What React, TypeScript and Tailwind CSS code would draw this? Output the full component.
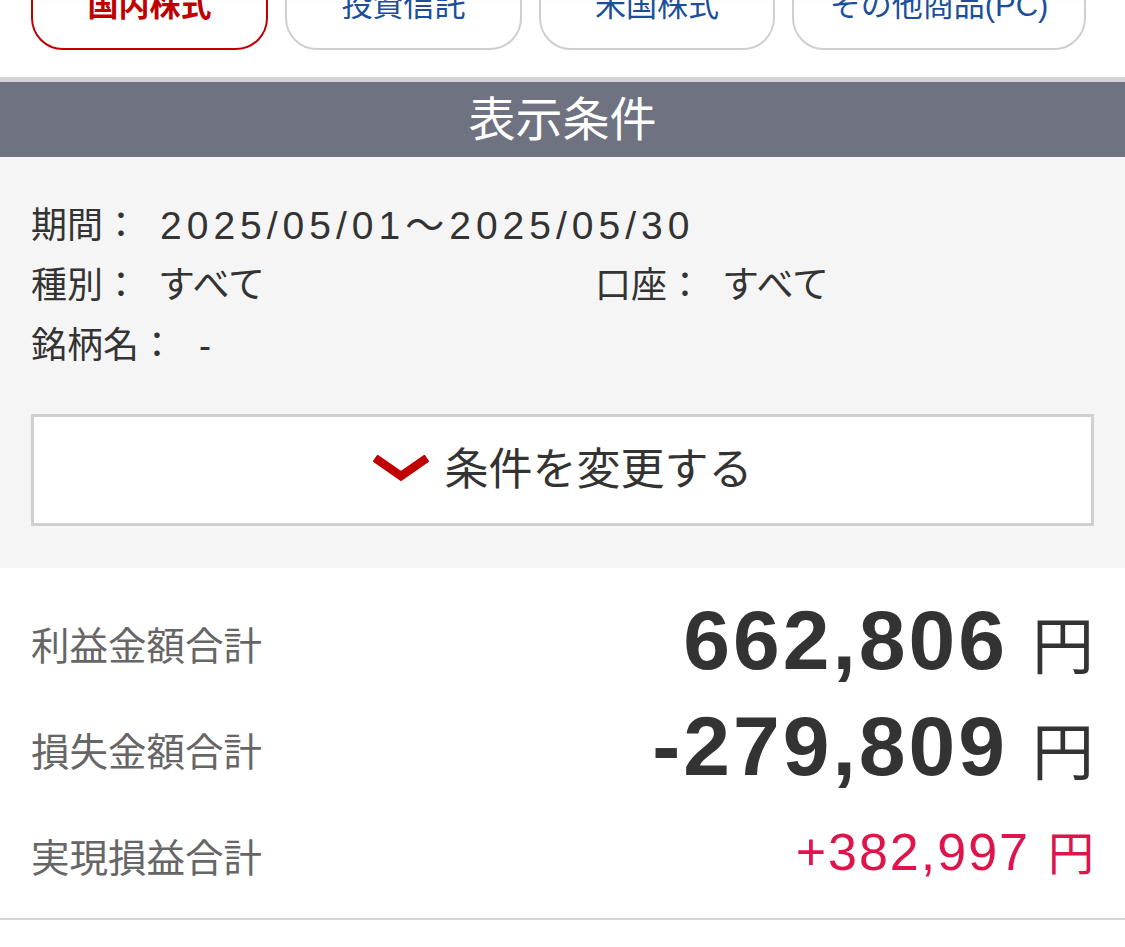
const jp = "font-['Liberation_Sans','Noto_Sans_CJK_JP',sans-serif]";

function Tab({ label, active, w }: { label: string; active?: boolean; w: string }) {
  return (
    <div
      className={`${w} h-[90px] flex items-center justify-center rounded-b-[32px] rounded-t-[32px] border-2 bg-gradient-to-b from-[#ececec] via-white to-white ${
        active ? "border-[#c00000] text-[#c00000] font-bold" : "border-[#cfcfcf] text-[#1b4f9c]"
      }`}
    >
      <span className="text-[31px] leading-none">{label}</span>
    </div>
  );
}

function Row({ label, value, big, red }: { label: string; value: string; big?: boolean; red?: boolean }) {
  return (
    <div className="flex h-[106px] items-center justify-between">
      <span className="text-[38.5px] text-[#666] leading-none pt-[14px]">{label}</span>
      {big ? (
        <div className="flex items-baseline text-[#333]">
          <span className="font-['Liberation_Sans',sans-serif] font-bold text-[84px] tracking-[3px] leading-none">{value}</span>
          <span className="text-[62px] leading-none ml-[24px]">円</span>
        </div>
      ) : (
        <div className={`flex items-baseline ${red ? "text-[#e0144c]" : "text-[#333]"}`}>
          <span className="font-['Liberation_Sans',sans-serif] text-[52px] tracking-[2px] leading-none">{value}</span>
          <span className="text-[46px] leading-none ml-[18px]">円</span>
        </div>
      )}
    </div>
  );
}

export default function App() {
  return (
    <div className={`${jp} w-[1125px] h-[947px] overflow-hidden bg-white`}>
      <div className="flex gap-[17px] pl-[31px] mt-[-40px]">
        <Tab label="国内株式" active w="w-[237px]" />
        <Tab label="投資信託" w="w-[237px]" />
        <Tab label="米国株式" w="w-[236px]" />
        <Tab label="その他商品(PC)" w="w-[294px]" />
      </div>

      <div className="mt-[27px] h-[5px] bg-[#d2d2d4]" />
      <div className="h-[75px] bg-[#6f7281] flex items-center justify-center">
        <span className="text-white text-[47px] leading-none">表示条件</span>
      </div>

      <div className="bg-[#f5f5f5] px-[31px] pt-[39px] pb-[42px] text-[#333]">
        <div className="text-[36px] leading-[60px]">
          <div className="flex">
            <span>期間：</span>
            <span className="ml-[21px] text-[39px] tracking-[5px]">2025/05/01〜2025/05/30</span>
          </div>
          <div className="grid grid-cols-[564px_1fr]">
            <div className="flex">
              <span>種別：</span>
              <span className="ml-[19px] text-[37px]">すべて</span>
            </div>
            <div className="flex">
              <span>口座：</span>
              <span className="ml-[19px] text-[37px]">すべて</span>
            </div>
          </div>
          <div className="flex">
            <span>銘柄名：</span>
            <span className="ml-[24px]">-</span>
          </div>
        </div>

        <div className="mt-[38px] h-[112px] bg-white border-[3px] border-[#d0d0d0] flex items-center justify-center">
          <svg width="56" height="28" viewBox="0 0 56 28" className="mr-[16px] mt-[-2px]">
            <polyline points="2,3 28,21 54,3" fill="none" stroke="#c00000" strokeWidth="8.5" strokeLinejoin="miter" />
          </svg>
          <span className="text-[44px] leading-none">条件を変更する</span>
        </div>
      </div>

      <div className="px-[31px] pt-[19px] pb-[13px] border-b-2 border-[#d4d4d4]">
        <Row label="利益金額合計" value="662,806" big />
        <Row label="損失金額合計" value="-279,809" big />
        <Row label="実現損益合計" value="+382,997" red />
      </div>
    </div>
  );
}
